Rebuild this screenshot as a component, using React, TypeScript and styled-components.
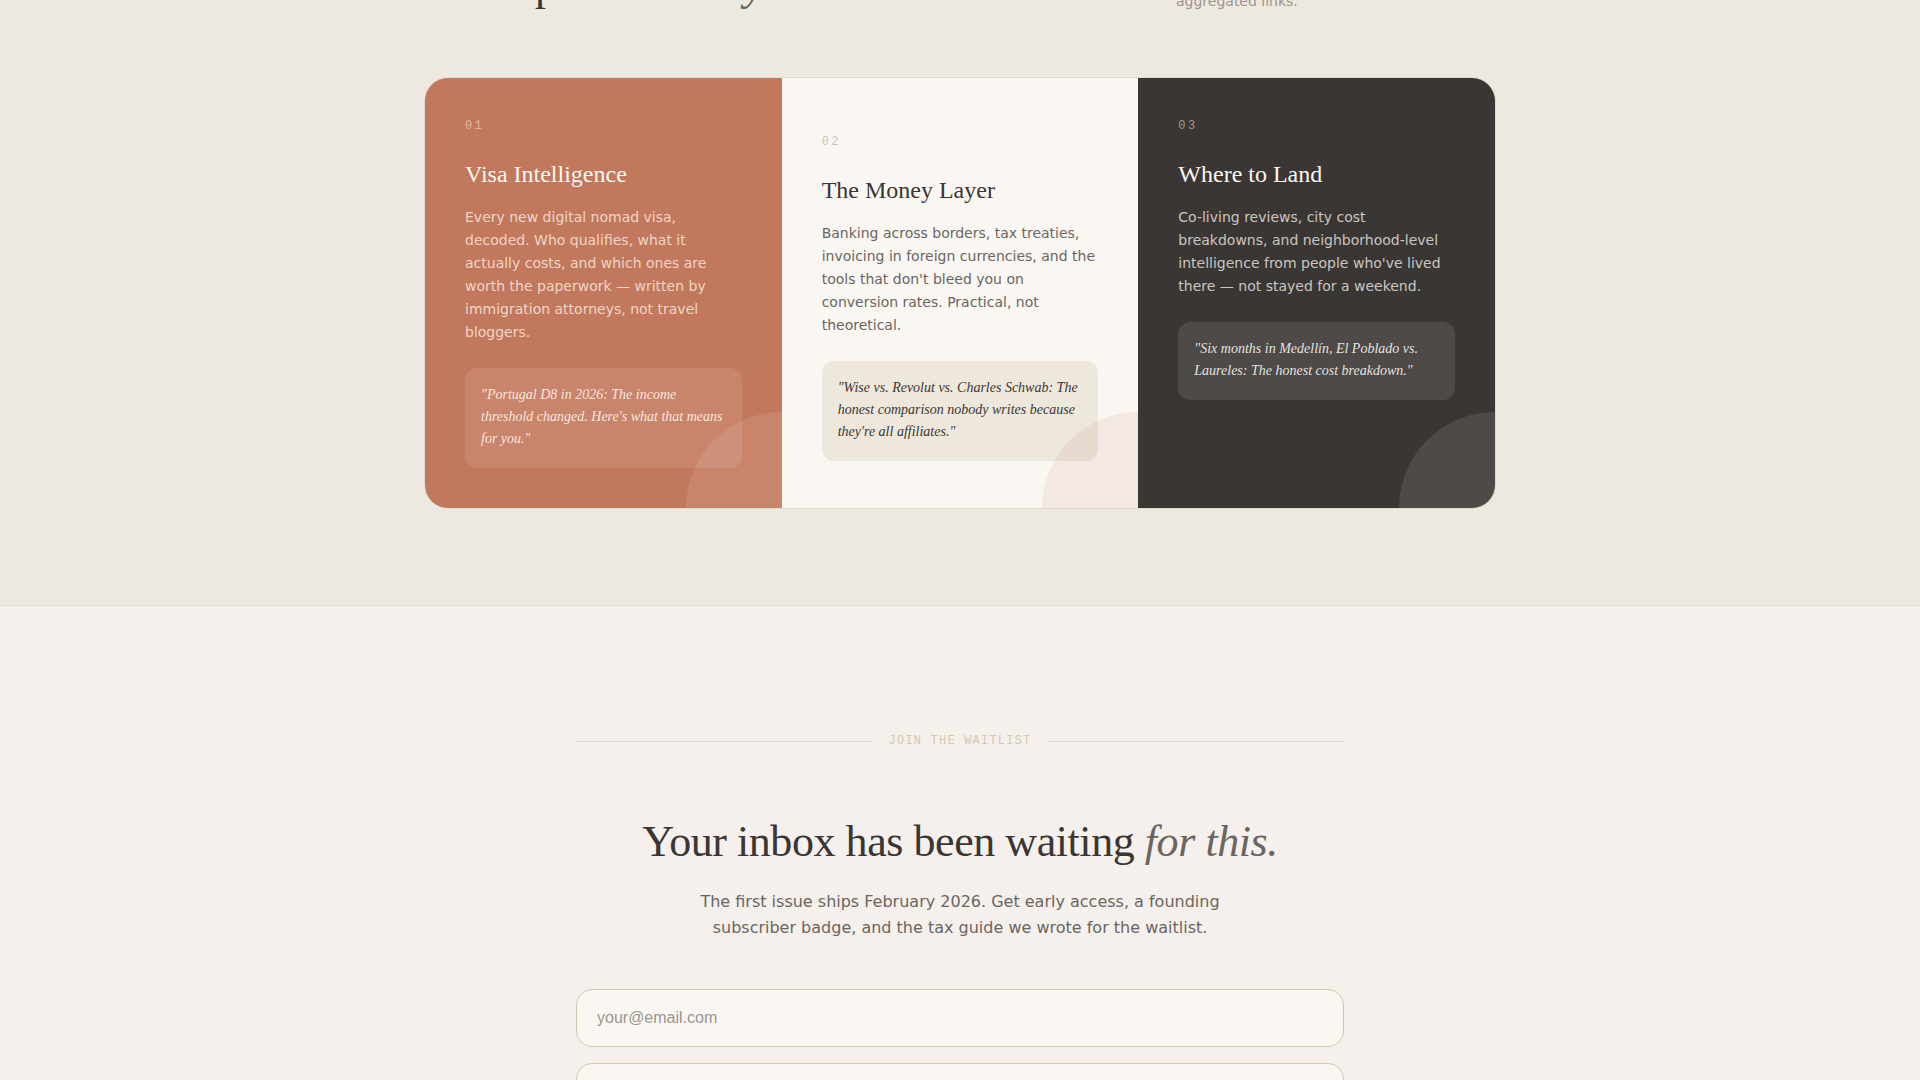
import React from "react"
import styled, { createGlobalStyle, css } from "styled-components"

type Tone = "clay" | "cream" | "charcoal"

interface Pillar {
  readonly number: string
  readonly title: string
  readonly body: string
  readonly quote: string
  readonly tone: Tone
}

const tones = {
  clay: {
    bg: "#c2785c",
    number: "rgba(250, 247, 242, 0.5)",
    title: "#faf7f2",
    body: "rgba(250, 238, 226, 0.8)",
    quoteBg: "rgba(255, 255, 255, 0.1)",
    quote: "rgba(255, 243, 234, 0.9)",
    arc: "rgba(255, 255, 255, 0.1)",
  },
  cream: {
    bg: "#faf7f2",
    number: "#cac5be",
    title: "#3a3633",
    body: "#6b6560",
    quoteBg: "#eee7dc",
    quote: "#3a3633",
    arc: "rgba(196, 112, 96, 0.1)",
  },
  charcoal: {
    bg: "#3a3633",
    number: "rgba(250, 247, 242, 0.5)",
    title: "#faf7f2",
    body: "rgba(250, 247, 242, 0.75)",
    quoteBg: "rgba(255, 255, 255, 0.1)",
    quote: "rgba(250, 247, 242, 0.9)",
    arc: "rgba(255, 255, 255, 0.1)",
  },
}

const pillars: readonly Pillar[] = [
  {
    number: "01",
    title: "Visa Intelligence",
    body:
      "Every new digital nomad visa, decoded. Who qualifies, what it actually costs, and which ones are worth the paperwork — written by immigration attorneys, not travel bloggers.",
    quote: `"Portugal D8 in 2026: The income threshold changed. Here's what that means for you."`,
    tone: "clay",
  },
  {
    number: "02",
    title: "The Money Layer",
    body:
      "Banking across borders, tax treaties, invoicing in foreign currencies, and the tools that don't bleed you on conversion rates. Practical, not theoretical.",
    quote: `"Wise vs. Revolut vs. Charles Schwab: The honest comparison nobody writes because they're all affiliates."`,
    tone: "cream",
  },
  {
    number: "03",
    title: "Where to Land",
    body:
      "Co-living reviews, city cost breakdowns, and neighborhood-level intelligence from people who've lived there — not stayed for a weekend.",
    quote: `"Six months in Medellín, El Poblado vs. Laureles: The honest cost breakdown."`,
    tone: "charcoal",
  },
]

const PillarCard = ({ number, title, body, quote, tone }: Pillar) => (
  <StyledCard $tone={tone}>
    <StyledNumber $tone={tone}>{number}</StyledNumber>
    <StyledCardTitle>{title}</StyledCardTitle>
    <StyledCardBody $tone={tone}>{body}</StyledCardBody>
    <StyledQuote $tone={tone}>{quote}</StyledQuote>
  </StyledCard>
)

export default () => (
  <>
    <GlobalStyle />
    <StyledPage>
      <StyledPillars>
        <StyledContainer>
          <StyledHeader>
            <StyledHeading>
              Three pillars. <em>Every issue.</em>
            </StyledHeading>
            <StyledIntro>
              Reported by people who live it. Never aggregated links.
            </StyledIntro>
          </StyledHeader>
          <StyledGrid>
            {pillars.map(pillar => (
              <PillarCard key={pillar.number} {...pillar} />
            ))}
          </StyledGrid>
        </StyledContainer>
      </StyledPillars>
      <StyledWaitlist>
        <StyledDivider>Join the waitlist</StyledDivider>
        <StyledHeading>
          Your inbox has been waiting <em>for this.</em>
        </StyledHeading>
        <StyledLead>
          The first issue ships February 2026. Get early access, a founding
          subscriber badge, and the tax guide we wrote for the waitlist.
        </StyledLead>
        <StyledForm>
          <StyledInput type="email" aria-label="Email" placeholder="your@email.com" />
          <StyledInput type="text" aria-label="First name" />
        </StyledForm>
      </StyledWaitlist>
    </StyledPage>
  </>
)

const serif = `"Liberation Serif", "Times New Roman", serif`
const sans = `"DejaVu Sans", Verdana, sans-serif`
const mono = `"Liberation Mono", "Courier New", monospace`

const GlobalStyle = createGlobalStyle`
  *, *::before, *::after {
    box-sizing: border-box;
  }
  body, h2, h3, p, blockquote {
    margin: 0;
  }
  body {
    background: #f5f0eb;
    color: #3a3633;
    font-family: ${sans};
  }
`

const StyledPage = styled.main`
  height: 100vh;
  overflow: hidden;
`

/* the section header is scrolled mostly out of view */
const StyledPillars = styled.section`
  margin-top: -41px;
  padding: 0 24px 96px;
  background: #ede8e0;
  border-bottom: 1px solid #e0dad1;
`

const StyledContainer = styled.div`
  max-width: 1072px;
  margin: 0 auto;
`

const StyledHeader = styled.header`
  display: flex;
  align-items: flex-end;
  justify-content: space-between;
  margin-bottom: 64px;
`

const StyledHeading = styled.h2`
  font-family: ${serif};
  font-size: 44px;
  line-height: 54px;
  font-weight: 400;
  letter-spacing: -0.01em;
  em {
    color: #6b6560;
  }
`

const StyledIntro = styled.p`
  width: 320px;
  font-size: 14px;
  line-height: 23px;
  color: #9c958e;
`

const StyledGrid = styled.div`
  display: grid;
  grid-template-columns: repeat(3, 1fr);
  overflow: hidden;
  border: 1px solid #e0dad1;
  border-radius: 24px;
`

const StyledCard = styled.article<{ $tone: Tone }>`
  position: relative;
  overflow: hidden;
  padding: 40px;
  background: ${props => tones[props.$tone].bg};
  color: ${props => tones[props.$tone].title};
  ${props =>
    props.$tone === "cream" &&
    css`
      padding-top: 56px;
    `}
  &::after {
    content: "";
    position: absolute;
    right: 0;
    bottom: 0;
    width: 96px;
    height: 96px;
    border-top-left-radius: 100%;
    background: ${props => tones[props.$tone].arc};
  }
`

const StyledNumber = styled.p<{ $tone: Tone }>`
  margin-bottom: 24px;
  font-family: ${mono};
  font-size: 12px;
  line-height: 16px;
  letter-spacing: 0.2em;
  color: ${props => tones[props.$tone].number};
`

const StyledCardTitle = styled.h3`
  margin-bottom: 16px;
  font-family: ${serif};
  font-size: 24px;
  line-height: 32px;
  font-weight: 400;
`

const StyledCardBody = styled.p<{ $tone: Tone }>`
  margin-bottom: 24px;
  font-size: 14px;
  line-height: 23px;
  color: ${props => tones[props.$tone].body};
`

const StyledQuote = styled.blockquote<{ $tone: Tone }>`
  padding: 16px 16px 18px;
  border-radius: 12px;
  font-family: ${serif};
  font-size: 14px;
  font-style: italic;
  line-height: 22px;
  background: ${props => tones[props.$tone].quoteBg};
  color: ${props => tones[props.$tone].quote};
`

const StyledWaitlist = styled.section`
  max-width: 768px;
  margin: 0 auto;
  padding: 128px 0;
  text-align: center;
`

const StyledDivider = styled.div`
  display: flex;
  align-items: center;
  gap: 16px;
  margin-bottom: 66px;
  font-family: ${mono};
  font-size: 12px;
  line-height: 15px;
  letter-spacing: 0.1em;
  text-transform: uppercase;
  color: #d4c8b0;
  &::before,
  &::after {
    content: "";
    flex: 1;
    height: 1px;
    background: #dfd9cf;
  }
`

const StyledLead = styled.p`
  max-width: 560px;
  margin: 20px auto 48px;
  font-size: 16px;
  line-height: 26px;
  color: #6b6560;
`

const StyledForm = styled.form`
  display: flex;
  flex-direction: column;
  gap: 16px;
`

const StyledInput = styled.input`
  width: 100%;
  height: 58px;
  padding: 0 20px;
  border: 1px solid #d2c6b2;
  border-radius: 16px;
  background: #faf7f2;
  color: #3a3633;
  font-family: "Liberation Sans", Arial, sans-serif;
  font-size: 16px;
  &::placeholder {
    color: #9c958e;
  }
`
